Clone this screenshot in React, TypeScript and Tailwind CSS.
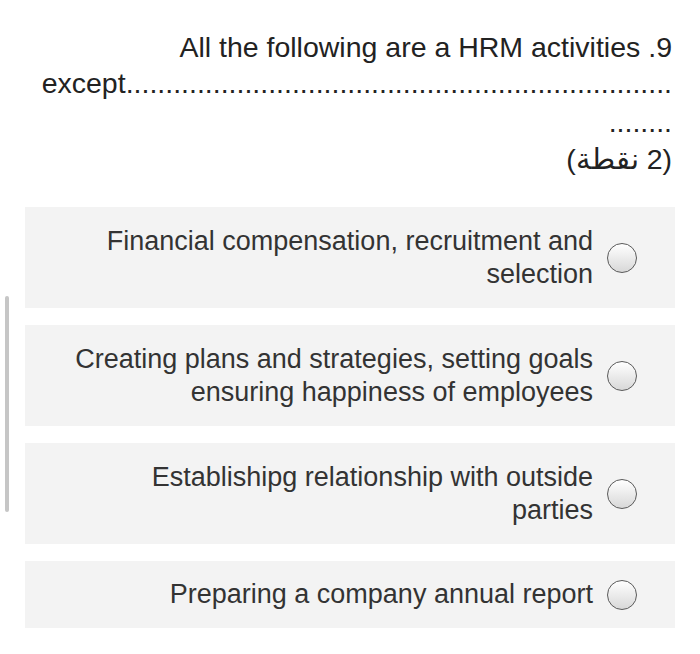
import React from "react";

const options = [
  ["Financial compensation, recruitment and", "selection"],
  ["Creating plans and strategies, setting goals", "ensuring happiness of employees"],
  ["Establishipg relationship with outside", "parties"],
  ["Preparing a company annual report"],
];

function Radio() {
  return (
    <div className="w-[30px] h-[30px] shrink-0 rounded-full border-[1.5px] border-[#5a5a5a] bg-gradient-to-b from-[#ffffff] to-[#d8d8d8]" />
  );
}

const dots = ".".repeat(69);

export default function App() {
  return (
    <div
      className="relative w-[700px] h-[654px] bg-white overflow-hidden"
      style={{ fontFamily: '"Liberation Sans", Arial, sans-serif' }}
    >
      <div className="absolute left-[5px] top-[296px] w-[4px] h-[216px] rounded-full bg-[#c6c6c6]" />
      <div className="pt-[29px] pr-[28px] pl-[30px] text-right text-[28.5px] leading-[36px] text-[#222]">
        <div>All the following are a HRM activities .9</div>
        <div className="whitespace-nowrap">except{dots}</div>
        <div className="mt-[3px]">........</div>
        <div className="mt-[1px] text-right" dir="rtl">{"(2 \u0646\u0642\u0637\u0629)"}</div>
      </div>
      <div className="mt-[30px] ml-[25px] w-[650px] flex flex-col gap-[17px]">
        {options.map((lines, i) => (
          <div
            key={i}
            className={`bg-[#f3f3f3] flex items-center justify-end pr-[38px] ${lines.length > 1 ? "h-[101px]" : "h-[67px]"}`}
          >
            <div className="text-right text-[27px] leading-[33px] text-[#333] mr-[14px]">
              {lines.map((l, j) => (
                <div key={j}>{l}</div>
              ))}
            </div>
            <Radio />
          </div>
        ))}
      </div>
    </div>
  );
}
